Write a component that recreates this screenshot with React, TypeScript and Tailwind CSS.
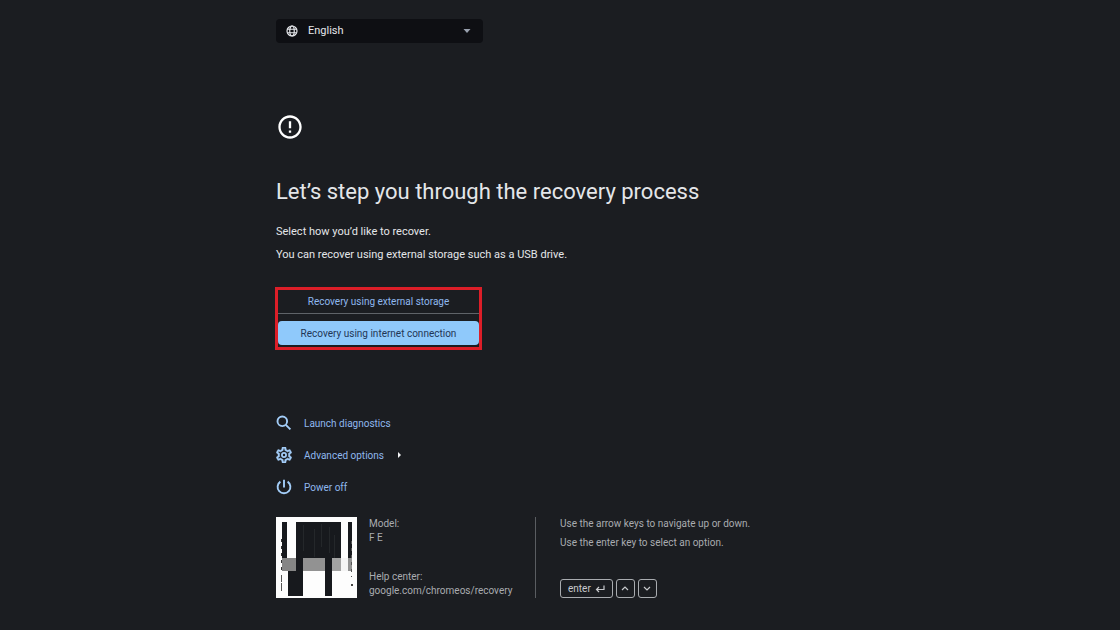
import React from 'react';

const GlobeIcon = () => (
  <svg viewBox="0 0 24 24" className="h-3 w-3 shrink-0 text-gray-200" fill="none" stroke="currentColor" strokeWidth="2.4" aria-hidden="true">
    <circle cx="12" cy="12" r="10" />
    <ellipse cx="12" cy="12" rx="4.5" ry="10" />
    <path d="M3 8.5 H21 M3 15.5 H21" />
  </svg>
);

const AlertIcon = () => (
  <svg viewBox="0 0 24 24" className="h-7 w-7" fill="currentColor" aria-hidden="true">
    <path d="M11 15h2v2h-2zm0-8h2v6h-2zm.99-5C6.47 2 2 6.48 2 12s4.47 10 9.99 10C17.52 22 22 17.52 22 12S17.52 2 11.99 2zM12 20c-4.42 0-8-3.58-8-8s3.58-8 8-8 8 3.58 8 8-3.58 8-8 8z" />
  </svg>
);

const SearchIcon = () => (
  <svg viewBox="0 0 16 16" className="h-4 w-4" fill="none" stroke="currentColor" strokeWidth="1.9" aria-hidden="true">
    <circle cx="6.3" cy="6.3" r="4.8" />
    <path d="M9.8 9.8 L 14.4 14.4" />
  </svg>
);

const GearIcon = () => (
  <svg viewBox="2 2 20 20" className="h-4 w-4" fill="currentColor" aria-hidden="true">
    <path d="M19.43 12.98c.04-.32.07-.64.07-.98 0-.34-.03-.66-.07-.98l2.11-1.65c.19-.15.24-.42.12-.64l-2-3.46c-.09-.16-.26-.25-.44-.25-.06 0-.12.01-.17.03l-2.49 1c-.52-.4-1.08-.73-1.69-.98l-.38-2.65C14.46 2.18 14.25 2 14 2h-4c-.25 0-.46.18-.49.42l-.38 2.65c-.61.25-1.17.59-1.69.98l-2.49-1c-.06-.02-.12-.03-.18-.03-.17 0-.34.09-.43.25l-2 3.46c-.13.22-.07.49.12.64l2.11 1.65c-.04.32-.07.65-.07.98 0 .33.03.66.07.98l-2.11 1.65c-.19.15-.24.42-.12.64l2 3.46c.09.16.26.25.44.25.06 0 .12-.01.17-.03l2.49-1c.52.4 1.08.73 1.69.98l.38 2.65c.03.24.24.42.49.42h4c.25 0 .46-.18.49-.42l.38-2.65c.61-.25 1.17-.59 1.69-.98l2.49 1c.06.02.12.03.18.03.17 0 .34-.09.43-.25l2-3.46c.12-.22.07-.49-.12-.64l-2.11-1.65zm-1.98-1.71c.04.31.05.52.05.73 0 .21-.02.43-.05.73l-.14 1.13.89.7 1.08.84-.7 1.21-1.27-.51-1.04-.42-.9.68c-.43.32-.84.56-1.25.73l-1.06.43-.16 1.13-.2 1.35h-1.4l-.19-1.35-.16-1.13-1.06-.43c-.43-.18-.83-.41-1.23-.71l-.91-.7-1.06.43-1.27.51-.7-1.21 1.08-.84.89-.7-.14-1.13c-.03-.31-.05-.54-.05-.74s.02-.43.05-.73l.14-1.13-.89-.7-1.08-.84.7-1.21 1.27.51 1.04.42.9-.68c.43-.32.84-.56 1.25-.73l1.06-.43.16-1.13.2-1.35h1.39l.19 1.35.16 1.13 1.06.43c.43.18.83.41 1.23.71l.91.7 1.06-.43 1.27-.51.7 1.21-1.07.85-.89.7.14 1.13z" stroke="currentColor" strokeWidth="0.5" />
    <circle cx="12" cy="12" r="2.6" fill="none" stroke="currentColor" strokeWidth="2.2" />
  </svg>
);

const PowerIcon = () => (
  <svg viewBox="0 0 16 16" className="h-4 w-4" fill="none" stroke="currentColor" strokeWidth="1.9" aria-hidden="true">
    <path d="M8 0.8 V 8.5" />
    <path d="M4.4 2.6 A 6.4 6.4 0 1 0 11.6 2.6" />
  </svg>
);

const QrCode = () => (
  <svg viewBox="0 0 81 81" className="h-[81px] w-[81px] shrink-0" role="img" aria-label="Recovery code" shapeRendering="crispEdges">
    <rect width="81" height="81" fill="#fdfdfd" />
    {/* Finder columns */}
    <rect x="6" y="5" width="5" height="37" fill="#17191d" />
    <rect x="72" y="5" width="4" height="37" fill="#17191d" />
    <rect x="20" y="5" width="45" height="37" fill="#17191d" />
    {/* Faint striping */}
    <path d="M27 8 V34 M38 12 V40 M45 7 V30 M53 10 V36 M58 18 V41" stroke="#24272a" strokeWidth="1" />
    {/* Grey band */}
    <rect x="6" y="41" width="14" height="13" fill="#858585" />
    <rect x="27" y="41" width="22" height="13" fill="#929292" />
    <rect x="56" y="41" width="9" height="13" fill="#a3a3a3" />
    <rect x="65" y="41" width="7" height="13" fill="#f4f4f4" />
    <rect x="72" y="41" width="4" height="13" fill="#929292" />
    {/* Legs */}
    <rect x="20" y="41" width="7" height="38" fill="#17191d" />
    <rect x="12" y="54" width="9" height="25" fill="#17191d" />
    <rect x="49" y="41" width="7" height="38" fill="#17191d" />
    {/* Edge specks */}
    <path d="M5.5 58 V76" stroke="#555" strokeWidth="1" strokeDasharray="7 1 8 2" />
    <path d="M5.5 22 V54" stroke="#333" strokeWidth="1" strokeDasharray="3 4" />
    <path d="M75.5 24 V60" stroke="#555" strokeWidth="1" strokeDasharray="3 4" />
    <rect x="75" y="67" width="2" height="2" fill="#444" />
  </svg>
);

const menuItems = [
  { label: 'Launch diagnostics', Icon: SearchIcon, submenu: false },
  { label: 'Advanced options', Icon: GearIcon, submenu: true },
  { label: 'Power off', Icon: PowerIcon, submenu: false },
];

const App: React.FC = () => {
  return (
    <div className="min-h-screen w-full bg-[#1b1d21] font-['Roboto','Liberation_Sans',sans-serif] text-[#e4e6e9]">
      <main className="mx-auto w-full max-w-[568px] pt-[19px] pb-8">
        {/* Language */}
        <div className="flex h-6 w-[207px] items-center rounded-sm bg-[#0e0f13] pr-3 pl-[10px]">
          <GlobeIcon />
          <select aria-label="Language" defaultValue="en" className="ml-[10px] h-6 grow appearance-none bg-transparent text-[11px] outline-none">
            <option value="en">English</option>
          </select>
          <svg viewBox="0 0 8 4" className="pointer-events-none h-1 w-2 text-gray-400" fill="currentColor" aria-hidden="true">
            <path d="M0.5 0 H7.5 L4 4 Z" />
          </svg>
        </div>

        <div className="mt-[70px] text-white">
          <AlertIcon />
        </div>

        <h1 className="mt-[37px] text-[22px] leading-7">Let’s step you through the recovery process</h1>
        <div className="mt-[14px] text-[11px] leading-[23px]">
          <p>Select how you’d like to recover.</p>
          <p>You can recover using external storage such as a USB drive.</p>
        </div>

        {/* Recovery choices */}
        <div className="-ml-px mt-[21px] flex w-[207px] flex-col gap-[7px] border-3 border-[#dc1e28] pb-[2px] text-[10px]">
          <button type="button" className="h-6 border-b border-[#5f6368] text-[#8fb8ee]">
            Recovery using external storage
          </button>
          <button type="button" className="h-6 rounded-sm bg-[#8fc9fb] text-[#1f3656]">
            Recovery using internet connection
          </button>
        </div>

        <nav className="mt-[57px] flex flex-col items-start text-[10px] text-[#8fb8ee]">
          {menuItems.map(({ label, Icon, submenu }) => (
            <button key={label} type="button" className="flex h-8 items-center">
              <span className="text-[#a3cdf8]">
                <Icon />
              </span>
              <span className="ml-3">{label}</span>
              {submenu && (
                <svg viewBox="0 0 3 6" className="ml-[14px] h-[6px] w-[3px] text-gray-100" fill="currentColor" aria-hidden="true">
                  <path d="M0 0 L 3 3 L 0 6 Z" />
                </svg>
              )}
            </button>
          ))}
        </nav>

        <footer className="mt-[14px] flex text-[10px] text-[#a9acb0]">
          <QrCode />
          <div className="ml-3 flex w-[166px] flex-col justify-between leading-[14px]">
            <p>
              Model:
              <br />F E
            </p>
            <p>
              Help center:
              <br />
              <a href="https://google.com/chromeos/recovery">google.com/chromeos/recovery</a>
            </p>
          </div>
          <div className="flex flex-col justify-between border-l border-[#5a5d61] pl-6">
            <div className="flex flex-col gap-[5px] leading-[14px]">
              <p>Use the arrow keys to navigate up or down.</p>
              <p>Use the enter key to select an option.</p>
            </div>
            <div className="flex gap-[3px]">
              <kbd className="flex h-[19px] items-center gap-1 rounded-[3px] border border-[#a9acb0] px-[7px] font-['Roboto',sans-serif] text-[#c8cacd]">
                enter
                <svg viewBox="0 0 10 8" className="h-2 w-[10px]" fill="none" stroke="currentColor" strokeWidth="1.2" aria-hidden="true">
                  <path d="M9 0.5 V4.5 H1.5 M4 2 L1.5 4.5 L4 7" />
                </svg>
              </kbd>
              <kbd className="flex h-[19px] w-[19px] items-center justify-center rounded-[3px] border border-[#a9acb0] text-[#c8cacd]" aria-label="Up">
                <svg viewBox="0 0 8 5" className="h-[5px] w-2" fill="none" stroke="currentColor" strokeWidth="1.2" aria-hidden="true">
                  <path d="M1 4 L4 1 L7 4" />
                </svg>
              </kbd>
              <kbd className="flex h-[19px] w-[19px] items-center justify-center rounded-[3px] border border-[#a9acb0] text-[#c8cacd]" aria-label="Down">
                <svg viewBox="0 0 8 5" className="h-[5px] w-2" fill="none" stroke="currentColor" strokeWidth="1.2" aria-hidden="true">
                  <path d="M1 1 L4 4 L7 1" />
                </svg>
              </kbd>
            </div>
          </div>
        </footer>
      </main>
    </div>
  );
};

export default App;
